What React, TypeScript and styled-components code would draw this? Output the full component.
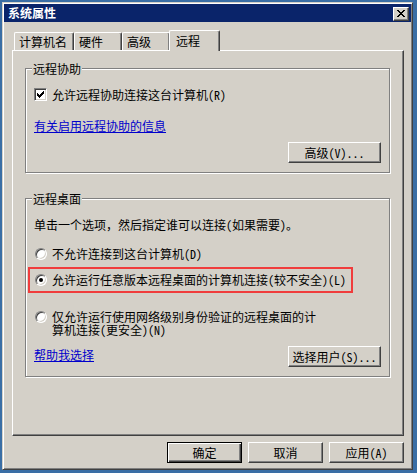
import React from "react";
import styled, { createGlobalStyle, css } from "styled-components";

const FACE = `"Noto Sans Mono CJK SC", "Noto Sans CJK SC", "Noto Sans", sans-serif`;

const Global = createGlobalStyle`
  html, body { margin: 0; padding: 0; }
  body {
    background: #3a6ea5;
    font-family: ${FACE};
    font-size: 12px;
    color: #000;
  }
  * { box-sizing: border-box; }
`;

const Desktop = styled.div`
  width: 417px;
  height: 473px;
  padding: 2px 0 0 2px;
  overflow: hidden;
`;

const Window = styled.div`
  width: 411px;
  height: 468px;
  background: #d4d0c8;
  border: 1px solid;
  border-color: #d4d0c8 #404040 #404040 #d4d0c8;
  box-shadow: inset 1px 1px 0 #fff, inset -1px -1px 0 #808080;
  padding: 1px;
  display: flex;
  flex-direction: column;
`;

const TitleBar = styled.div`
  height: 18px;
  flex: none;
  background: #0a246a;
  display: flex;
  align-items: flex-start;
  justify-content: space-between;
  padding: 0 2px 0 4px;
`;

const TitleText = styled.span`
  color: #fff;
  font-weight: bold;
  font-size: 12px;
  line-height: 18px;
  letter-spacing: 0;
`;

const raised = css`
  background: #d4d0c8;
  border: 1px solid;
  border-color: #fff #404040 #404040 #fff;
  box-shadow: inset -1px -1px 0 #808080;
`;

const CloseButton = styled.div`
  ${raised};
  width: 16px;
  height: 14px;
  margin-top: 3px;
  display: flex;
  padding: 2px 0 0 3px;
`;

const Body = styled.div`
  padding: 8px 6px 0 8px;
  display: flex;
  flex-direction: column;
`;

const TabStrip = styled.div`
  height: 20px;
  display: flex;
  align-items: flex-end;
  padding-left: 2px;
  position: relative;
  z-index: 1;
`;

const Tab = styled.div<{ $active?: boolean; $w: number }>`
  width: ${(p) => p.$w}px;
  height: 18px;
  background: #d4d0c8;
  border-top: 1px solid #fff;
  border-left: 1px solid #fff;
  border-right: 1px solid #404040;
  box-shadow: inset -1px 0 0 #808080;
  border-radius: 2px 2px 0 0;
  padding-left: 4px;
  line-height: 17px;
  white-space: nowrap;
  ${(p) =>
    p.$active &&
    css`
      height: 21px;
      margin: 0 -2px -1px -1px;
      padding-left: 6px;
      padding-top: 1px;
    `}
`;

const Panel = styled.div`
  width: 392px;
  height: 386px;
  border: 1px solid;
  border-color: #fff #404040 #404040 #fff;
  box-shadow: inset -1px -1px 0 #808080;
  padding: 17px 12px 0 12px;
  display: flex;
  flex-direction: column;
`;

const GroupBox = styled.div<{ $gap?: number }>`
  position: relative;
  width: 365px;
  margin-top: ${(p) => p.$gap ?? 0}px;
  border: 1px solid #808080;
  box-shadow: inset 1px 1px 0 #fff, 1px 1px 0 #fff;
  padding: 19px 8px 9px 8px;
  display: flex;
  flex-direction: column;
`;

const Legend = styled.span`
  position: absolute;
  top: -7px;
  left: 6px;
  padding: 0 1px;
  background: #d4d0c8;
  line-height: 14px;
`;

const OptionRow = styled.div<{ $mt?: number; $lh?: number }>`
  display: flex;
  align-items: ${(p) => (p.$lh ? "flex-start" : "center")};
  gap: 5px;
  padding-left: 1px;
  margin-top: ${(p) => p.$mt ?? 0}px;
  line-height: ${(p) => p.$lh ?? 14}px;
  white-space: nowrap;
`;

const CheckRow = styled.div`
  display: flex;
  align-items: center;
  gap: 5px;
  height: 13px;
  line-height: 13px;
  white-space: nowrap;
`;

const CheckBox = styled.span`
  width: 13px;
  height: 13px;
  flex: none;
  background: #fff;
  border: 1px solid;
  border-color: #808080 #fff #fff #808080;
  box-shadow: inset 1px 1px 0 #404040, inset -1px -1px 0 #d4d0c8;
  position: relative;
  svg {
    position: absolute;
    left: -1px;
    top: -1px;
  }
`;

const Radio = styled.span<{ $on?: boolean; $mt?: number }>`
  width: 12px;
  height: 12px;
  flex: none;
  margin-top: ${(p) => p.$mt ?? 0}px;
  border-radius: 50%;
  background: #fff;
  border: 1px solid;
  border-color: #808080 #fff #fff #808080;
  box-shadow: inset 1px 1px 0 #404040, inset -1px -1px 0 #d4d0c8;
  display: flex;
  align-items: center;
  justify-content: center;
  &::after {
    content: "";
    width: 4px;
    height: 4px;
    border-radius: 50%;
    background: ${(p) => (p.$on ? "#000" : "transparent")};
  }
`;

const Link = styled.a<{ $mt?: number }>`
  align-self: flex-start;
  margin-top: ${(p) => p.$mt ?? 0}px;
  line-height: 14px;
  color: #0000cc;
  text-decoration: underline;
  white-space: nowrap;
  cursor: pointer;
`;

const Desc = styled.div`
  line-height: 14px;
  white-space: nowrap;
`;

const Highlight = styled.div`
  margin: 6px 0 0 -6px;
  width: 325px;
  border: 2px solid #f03c3c;
  padding: 4px 0 4px 4px;
`;

const ButtonRow = styled.div<{ $mt?: number; $spread?: boolean }>`
  display: flex;
  align-items: center;
  justify-content: ${(p) => (p.$spread ? "space-between" : "flex-end")};
  margin-top: ${(p) => p.$mt ?? 0}px;
`;

const Button = styled.button<{ $w?: number; $default?: boolean }>`
  ${raised};
  width: ${(p) => p.$w ?? 75}px;
  height: 21px;
  padding: 0;
  margin: 0;
  font-family: ${FACE};
  font-size: 12px;
  line-height: 19px;
  color: #000;
  white-space: nowrap;
  ${(p) =>
    p.$default &&
    css`
      border-color: #000;
      box-shadow: inset 1px 1px 0 #fff, inset -1px -1px 0 #404040,
        inset -2px -2px 0 #808080;
    `}
`;

const Footer = styled.div`
  width: 392px;
  display: flex;
  justify-content: flex-end;
  gap: 6px;
  margin-top: 6px;
`;

const CheckMark = () => (
  <svg width="13" height="13" viewBox="0 0 13 13" shapeRendering="crispEdges">
    <path
      fill="#000"
      d="M9 3h1v1h-1z M8 4h2v1h-2z M3 5h1v1h-1z M7 5h3v1h-3z M3 6h2v1h-2z M6 6h3v1h-3z M3 7h5v1h-5z M4 8h3v1h-3z M5 9h1v1h-1z"
    />
  </svg>
);

const CloseGlyph = () => (
  <svg width="8" height="7" viewBox="0 0 8 7" shapeRendering="crispEdges">
    <path
      fill="#000"
      d="M0 0h2v1h-2z M6 0h2v1h-2z M1 1h2v1h-2z M5 1h2v1h-2z M2 2h4v1h-4z M3 3h2v1h-2z M2 4h4v1h-4z M1 5h2v1h-2z M5 5h2v1h-2z M0 6h2v1h-2z M6 6h2v1h-2z"
    />
  </svg>
);

export default function App() {
  return (
    <>
      <Global />
      <Desktop>
        <Window>
          <TitleBar>
            <TitleText>系统属性</TitleText>
            <CloseButton>
              <CloseGlyph />
            </CloseButton>
          </TitleBar>
          <Body>
            <TabStrip>
              <Tab $w={60}>计算机名</Tab>
              <Tab $w={48}>硬件</Tab>
              <Tab $w={48}>高级</Tab>
              <Tab $w={51} $active>
                远程
              </Tab>
            </TabStrip>
            <Panel>
              <GroupBox>
                <Legend>远程协助</Legend>
                <CheckRow>
                  <CheckBox>
                    <CheckMark />
                  </CheckBox>
                  <span>允许远程协助连接这台计算机(R)</span>
                </CheckRow>
                <Link $mt={18}>有关启用远程协助的信息</Link>
                <ButtonRow $mt={9}>
                  <Button $w={93}>高级(V)...</Button>
                </ButtonRow>
              </GroupBox>
              <GroupBox $gap={25}>
                <Legend>远程桌面</Legend>
                <Desc>单击一个选项，然后指定谁可以连接(如果需要)。</Desc>
                <OptionRow $mt={15}>
                  <Radio />
                  <span>不允许连接到这台计算机(D)</span>
                </OptionRow>
                <Highlight>
                  <OptionRow>
                    <Radio $on />
                    <span>允许运行任意版本远程桌面的计算机连接(较不安全)(L)</span>
                  </OptionRow>
                </Highlight>
                <OptionRow $mt={17} $lh={13}>
                  <Radio $mt={1} />
                  <span>
                    仅允许运行使用网络级别身份验证的远程桌面的计
                    <br />
                    算机连接(更安全)(N)
                  </span>
                </OptionRow>
                <ButtonRow $mt={10} $spread>
                  <Link $mt={2}>帮助我选择</Link>
                  <Button $w={93}>选择用户(S)...</Button>
                </ButtonRow>
              </GroupBox>
            </Panel>
            <Footer>
              <Button $default>确定</Button>
              <Button>取消</Button>
              <Button>应用(A)</Button>
            </Footer>
          </Body>
        </Window>
      </Desktop>
    </>
  );
}
